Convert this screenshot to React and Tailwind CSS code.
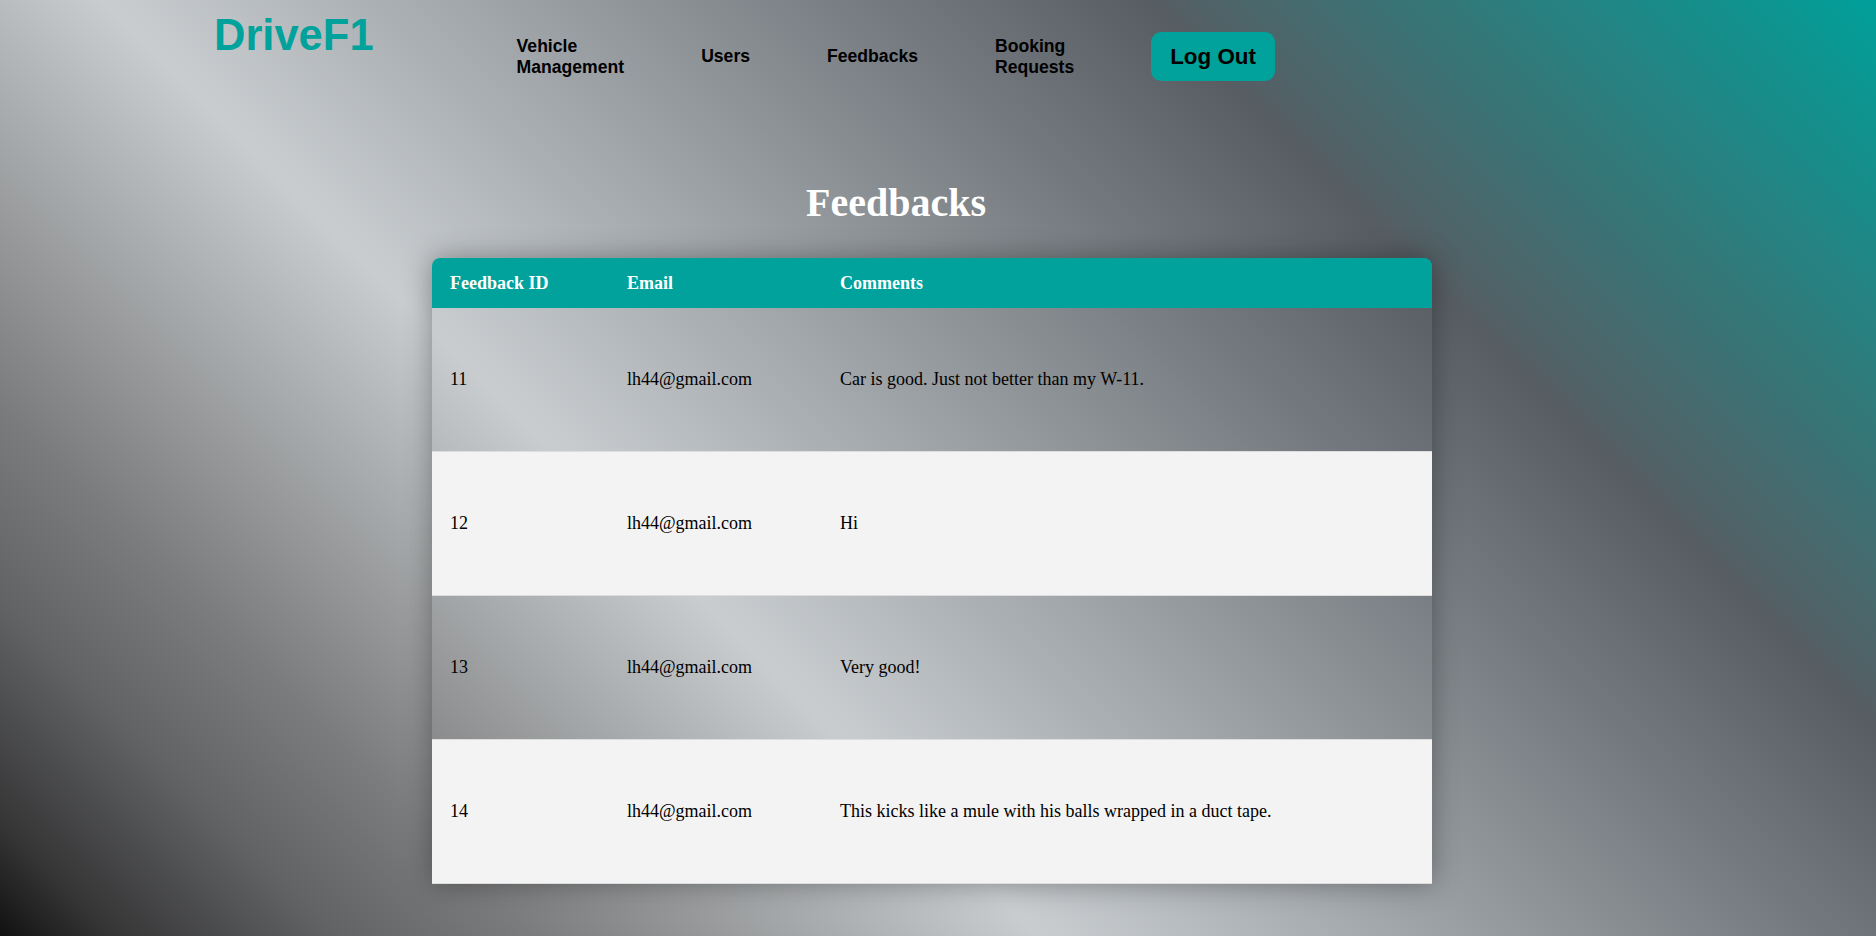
const feedbacks = [
  { id: 11, email: "lh44@gmail.com", comment: "Car is good. Just not better than my W-11." },
  { id: 12, email: "lh44@gmail.com", comment: "Hi" },
  { id: 13, email: "lh44@gmail.com", comment: "Very good!" },
  { id: 14, email: "lh44@gmail.com", comment: "This kicks like a mule with his balls wrapped in a duct tape." },
];

function Header() {
  return (
    <header className="flex items-start pl-[214px] font-['Liberation_Sans',Arial,sans-serif]">
      <h1 className="mt-[10px] text-[43.5px] leading-[50px] font-bold text-[#00a29b]">
        DriveF1
      </h1>
      <nav className="ml-[143px] mt-[32px] flex items-center gap-[77px] text-[17.6px] font-bold text-black leading-[20.2px]">
        <a className="w-min cursor-pointer">Vehicle Management</a>
        <a className="cursor-pointer">Users</a>
        <a className="cursor-pointer">Feedbacks</a>
        <a className="w-min cursor-pointer">Booking Requests</a>
        <button className="bg-[#00a29b] text-black text-[22.4px] leading-[25px] font-bold px-[19px] py-3 rounded-[10px]">
          Log Out
        </button>
      </nav>
    </header>
  );
}

export default function App() {
  return (
    <div className="min-h-screen bg-[linear-gradient(45deg,#111111_0%,#353536_4%,#626365_12%,#7b7c7d_19%,#c9cdd0_37%,#575d63_74%,#009f99_100%)] pb-[52px]">
      <Header />
      <main className="font-['Liberation_Serif','Times_New_Roman',serif]">
        <h2 className="mt-[99px] pr-[84px] text-center text-[40px] leading-[46px] font-bold text-white">
          Feedbacks
        </h2>
        <div className="mt-[32px] ml-[432px] w-[1000px] rounded-t-[8px] overflow-hidden shadow-[0_0_28px_rgba(0,0,0,0.35)]">
          <div className="grid grid-cols-[177px_213px_1fr] items-center h-[50px] bg-[#00a29b] text-white text-[18px] font-bold">
            <div className="px-[18px]">Feedback ID</div>
            <div className="px-[18px]">Email</div>
            <div className="px-[18px]">Comments</div>
          </div>
          {feedbacks.map((f, i) => (
            <div
              key={f.id}
              className={
                "grid grid-cols-[177px_213px_1fr] items-center h-[144px] text-[18px] text-black border-b border-[#dddddd] " +
                (i % 2 === 1 ? "bg-[#f3f3f3]" : "bg-transparent")
              }
            >
              <div className="px-[18px]">{f.id}</div>
              <div className="px-[18px]">{f.email}</div>
              <div className="px-[18px]">{f.comment}</div>
            </div>
          ))}
        </div>
      </main>
    </div>
  );
}
